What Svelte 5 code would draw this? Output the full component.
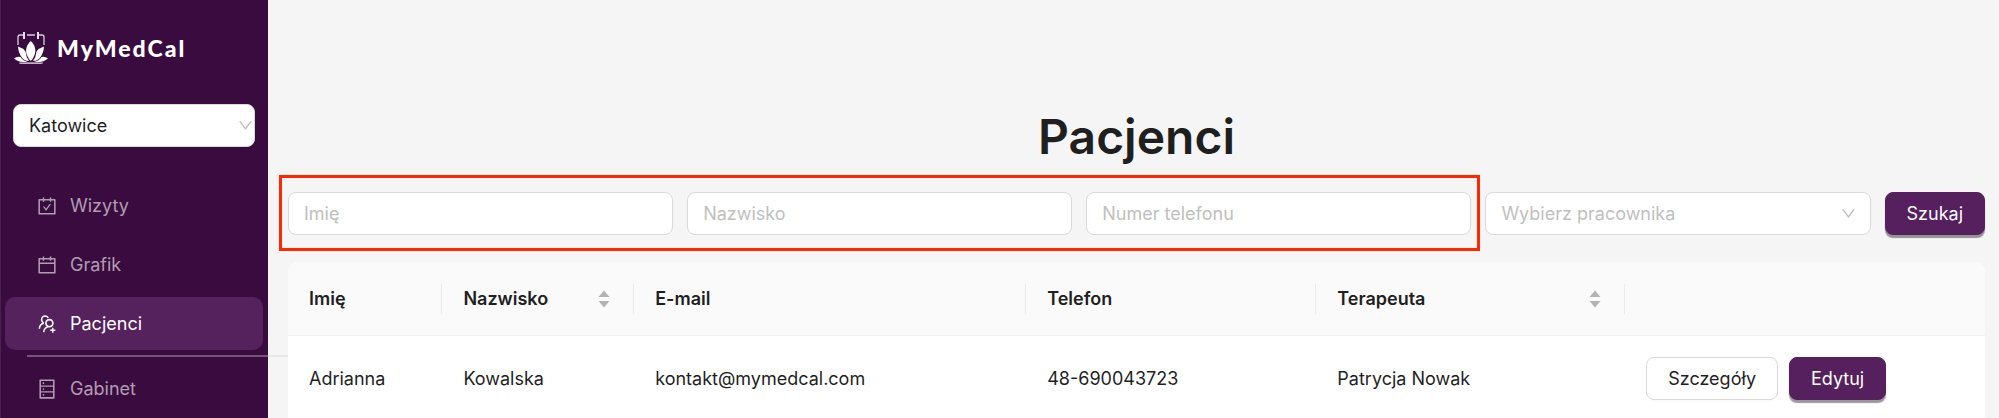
<script lang="ts">
	const nav = [
		{
			label: 'Wizyty',
			icon: 'M880 184H712v-64c0-4.4-3.6-8-8-8h-56c-4.4 0-8 3.6-8 8v64H384v-64c0-4.4-3.6-8-8-8h-56c-4.4 0-8 3.6-8 8v64H144c-17.7 0-32 14.3-32 32v664c0 17.7 14.3 32 32 32h736c17.7 0 32-14.3 32-32V216c0-17.7-14.3-32-32-32zm-40 656H184V256h128v48c0 4.4 3.6 8 8 8h56c4.4 0 8-3.6 8-8v-48h256v48c0 4.4 3.6 8 8 8h56c4.4 0 8-3.6 8-8v-48h128v584zM688 420h-55.2c-5.1 0-10 2.5-13 6.6L468.9 634.4l-64.7-89c-3-4.1-7.8-6.6-13-6.6H336c-6.5 0-10.3 7.4-6.5 12.7l126.4 174a16.1 16.1 0 0026 0l212.6-292.7c3.8-5.4 0-12.8-6.5-12.8z'
		},
		{
			label: 'Grafik',
			icon: 'M880 184H712v-64c0-4.4-3.6-8-8-8h-56c-4.4 0-8 3.6-8 8v64H384v-64c0-4.4-3.6-8-8-8h-56c-4.4 0-8 3.6-8 8v64H144c-17.7 0-32 14.3-32 32v664c0 17.7 14.3 32 32 32h736c17.7 0 32-14.3 32-32V216c0-17.7-14.3-32-32-32zm-40 656H184V460h656v380zM184 392V256h128v48c0 4.4 3.6 8 8 8h56c4.4 0 8-3.6 8-8v-48h256v48c0 4.4 3.6 8 8 8h56c4.4 0 8-3.6 8-8v-48h128v136H184z'
		},
		{
			label: 'Pacjenci',
			icon: 'M892 772h-80v-80c0-4.4-3.6-8-8-8h-48c-4.4 0-8 3.6-8 8v80h-80c-4.4 0-8 3.6-8 8v48c0 4.4 3.6 8 8 8h80v80c0 4.4 3.6 8 8 8h48c4.4 0 8-3.6 8-8v-80h80c4.4 0 8-3.6 8-8v-48c0-4.4-3.6-8-8-8zM373.5 498.4c-.9-8.7-1.4-17.5-1.4-26.4 0-15.9 1.5-31.4 4.3-46.5.7-3.6-1.2-7.3-4.5-8.8-13.6-6.1-26.1-14.5-36.9-25.1a127.54 127.54 0 01-38.7-95.4c.9-32.1 13.8-62.6 36.3-85.6 24.7-25.3 57.9-39.1 93.2-38.7 31.9.3 62.7 12.6 86 34.4 7.9 7.4 14.7 15.6 20.4 24.4 2 3.1 5.9 4.4 9.3 3.2 17.6-6.1 36.2-10.4 55.3-12.4 5.6-.6 8.8-6.6 6.3-11.6-32.5-64.3-98.9-108.7-175.7-109.9-110.9-1.7-203.3 89.2-203.3 199.9 0 62.8 28.9 118.8 74.2 155.5-31.8 14.7-61.1 35-86.5 60.4-54.8 54.7-85.8 126.9-87.8 204a8 8 0 008 8.2h56.1c4.3 0 7.9-3.4 8-7.7 1.9-58 25.4-112.3 66.7-153.5 29.4-29.4 65.4-49.8 104.7-59.7 3.9-1 6.5-4.7 6-8.7zM824 472c0-109.4-87.9-198.3-196.9-200C516.3 270.3 424 361.2 424 472c0 62.8 29 118.8 74.2 155.5a300.95 300.95 0 00-86.4 60.4C357 742.6 326 814.8 324 891.8a8 8 0 008 8.2h56c4.3 0 7.9-3.4 8-7.7 1.9-58 25.4-112.3 66.7-153.5C505.8 695.7 563 672 624 672c110.4 0 200-89.5 200-200zm-109.5 90.5C690.3 586.7 658.2 600 624 600s-66.3-13.3-90.5-37.5a127.26 127.26 0 01-37.5-91.8c.3-32.8 13.4-64.5 36.3-88 24-24.6 56.1-38.3 90.4-38.7 33.9-.3 66.8 12.9 91 36.6 24.8 24.3 38.4 56.8 38.4 91.4 0 34.2-13.3 66.3-37.5 90.5z'
		},
		{
			label: 'Gabinet',
			divided: true,
			icon: 'M832 64H192c-17.7 0-32 14.3-32 32v832c0 17.7 14.3 32 32 32h640c17.7 0 32-14.3 32-32V96c0-17.7-14.3-32-32-32zm-600 72h560v208H232V136zm560 480H232V408h560v208zm0 272H232V680h560v208zM304 240a40 40 0 1080 0 40 40 0 10-80 0zm0 272a40 40 0 1080 0 40 40 0 10-80 0zm0 272a40 40 0 1080 0 40 40 0 10-80 0z'
		}
	];

	const columns = [
		{ key: 'name', title: 'Imię' },
		{ key: 'surname', title: 'Nazwisko', sortable: true },
		{ key: 'email', title: 'E-mail' },
		{ key: 'phone', title: 'Telefon' },
		{ key: 'therapist', title: 'Terapeuta', sortable: true }
	];

	let active = $state('Pacjenci');
	let city = $state('Katowice');
	let filters = $state({ name: '', surname: '', phone: '', worker: '' });
	let sortKey = $state('');

	const patients = [
		{
			name: 'Adrianna',
			surname: 'Kowalska',
			email: 'kontakt@mymedcal.com',
			phone: '48-690043723',
			therapist: 'Patrycja Nowak'
		}
	];

	let query = $state({ name: '', surname: '', phone: '', worker: '' });

	let rows = $derived(
		patients
			.filter(
				(p) =>
					p.name.toLowerCase().includes(query.name.toLowerCase()) &&
					p.surname.toLowerCase().includes(query.surname.toLowerCase()) &&
					p.phone.includes(query.phone) &&
					p.therapist.includes(query.worker)
			)
			.sort((a: any, b: any) => (sortKey ? a[sortKey].localeCompare(b[sortKey]) : 0))
	);

	const search = (event: SubmitEvent) => {
		event.preventDefault();
		query = { ...filters };
	};
</script>

{#snippet chevron()}
	<svg class="chevron" viewBox="0 0 1024 1024" aria-hidden="true">
		<path
			d="M884 256h-75c-5.1 0-9.9 2.5-12.9 6.6L512 654.2 227.9 262.6c-3-4.1-7.8-6.6-12.9-6.6h-75c-6.5 0-10.3 7.4-6.5 12.7l352.6 486.1c12.8 17.6 39 17.6 51.7 0l352.6-486.1c3.9-5.3.1-12.7-6.4-12.7z"
		/>
	</svg>
{/snippet}

<div class="layout">
	<aside class="sidebar">
		<div class="brand">
			<svg class="brand_logo" viewBox="0 0 34 34" aria-hidden="true">
				<path
					d="M4 14V6q0-2 2-2h4M13 4h8M24 4h4q2 0 2 2v8"
					fill="none"
					stroke="#d9cedb"
					stroke-width="1.3"
				/>
				<path d="M10 1v7M24 1v7" stroke="#e6dfe7" stroke-width="2" />
				<path
					d="M16.800 10C21 14 22.500 19 20.500 24Q19 28 16.800 30Q14.500 28 13 24C11 19 12.500 14 16.800 10zM4 15.500Q9 17 11.500 20.500Q12 26 15 30Q10 30 7.500 26Q4.500 22 4 15.500zM30 15.500Q25 17 22.500 20.500Q22 26 19 30Q24 30 26.500 26Q29.500 22 30 15.500zM0 27.500Q3 25 6.500 26Q9 30 13.500 30.500Q6 32.500 0 27.500zM34 27.500Q31 25 27.500 26Q25 30 20.500 30.500Q28 32.500 34 27.500z"
					fill="#fff"
				/>
				<path d="M5 31.500Q17 31 29 31.500Q29 33 27 33H7Q5 33 5 31.500z" fill="#c4b3c7" />
			</svg>
			<span class="brand_name">MyMedCal</span>
		</div>

		<div class="select city">
			<select aria-label="Miasto" bind:value={city}>
				<option>Katowice</option>
			</select>
			{@render chevron()}
		</div>

		<nav class="menu">
			{#each nav as item}
				{#if item.divided}
					<hr class="menu_divider" />
				{/if}
				<a
					class="menu_item"
					class:active={active === item.label}
					href="#{item.label.toLowerCase()}"
					onclick={() => (active = item.label)}
				>
					<svg class="menu_icon" viewBox="0 0 1024 1024" aria-hidden="true">
						<path d={item.icon} />
					</svg>
					{item.label}
				</a>
			{/each}
		</nav>
	</aside>

	<main class="content">
		<h1>Pacjenci</h1>

		<form class="filters" onsubmit={search}>
			<div class="filters_group">
				<input aria-label="Imię" placeholder="Imię" bind:value={filters.name} />
				<input aria-label="Nazwisko" placeholder="Nazwisko" bind:value={filters.surname} />
				<input aria-label="Numer telefonu" placeholder="Numer telefonu" bind:value={filters.phone} />
			</div>
			<div class="select worker" class:empty={!filters.worker}>
				<select aria-label="Wybierz pracownika" bind:value={filters.worker}>
					<option value="">Wybierz pracownika</option>
					<option>Patrycja Nowak</option>
				</select>
				{@render chevron()}
			</div>
			<button class="btn primary" type="submit">Szukaj</button>
		</form>

		<table>
			<colgroup>
				{#each columns as column}
					<col class="col_{column.key}" />
				{/each}
				<col />
			</colgroup>
			<thead>
				<tr>
					{#each columns as column}
						<th scope="col">
							<div class="head">
								{column.title}
								{#if column.sortable}
									<button
										class="sorter"
										type="button"
										aria-label="Sortuj: {column.title}"
										onclick={() => (sortKey = column.key)}
									>
										<svg viewBox="0 0 12 18" aria-hidden="true">
											<path d="M6 0.500L11.500 7H0.500zM6 17.500L11.500 11H0.500z" />
										</svg>
									</button>
								{/if}
							</div>
						</th>
					{/each}
					<td></td>
				</tr>
			</thead>
			<tbody>
				{#each rows as row}
					<tr>
						<td>{row.name}</td>
						<td>{row.surname}</td>
						<td>{row.email}</td>
						<td>{row.phone}</td>
						<td>{row.therapist}</td>
						<td>
							<div class="actions">
								<button class="btn" type="button">Szczegóły</button>
								<button class="btn primary" type="button">Edytuj</button>
							</div>
						</td>
					</tr>
				{/each}
			</tbody>
		</table>
	</main>
</div>

<style>
	:global(body) {
		background: #f5f5f5;
	}

	.layout {
		display: flex;
		height: 100vh;
		overflow: hidden;
		font-family: Inter, 'Liberation Sans', sans-serif;
		font-size: 18px;
		line-height: 28px;
		color: #1f1f1f;
	}

	.layout * {
		box-sizing: border-box;
	}

	input,
	select,
	button {
		font: inherit;
		color: inherit;
	}

	.sidebar {
		flex: none;
		width: 268px;
		background: #3a0b3f;
		border-left: 1px solid #4a2150;
	}

	.brand {
		display: flex;
		align-items: center;
		gap: 9px;
		height: 104px;
		padding: 0 13px 9px;
	}

	.brand_logo {
		width: 34px;
		height: 34px;
	}

	.brand_name {
		font-family: Lato, sans-serif;
		font-size: 23px;
		font-weight: 900;
		letter-spacing: 2px;
		color: #fff;
	}

	.select {
		position: relative;
	}

	.select select {
		display: block;
		width: 100%;
		height: 43px;
		padding: 0 40px 0 15px;
		appearance: none;
		background: #fff;
		border: 1px solid #d9d9d9;
		border-radius: 8px;
	}

	.select.empty select {
		color: #bfbfbf;
	}

	.chevron {
		position: absolute;
		top: 13px;
		right: 14px;
		width: 17px;
		height: 17px;
		fill: #bfbfbf;
		pointer-events: none;
	}

	.city {
		margin: 0 13px 0 12px;
	}

	.city .chevron {
		right: 1px;
	}

	.menu {
		display: flex;
		flex-direction: column;
		gap: 6px;
		padding: 32px 5px 0 4px;
	}

	.menu_item {
		display: flex;
		align-items: center;
		gap: 12px;
		height: 53px;
		padding: 0 31px;
		border-radius: 10px;
		color: #b09db2;
		text-decoration: none;
	}

	.menu_item.active {
		background: #55225d;
		color: #fff;
	}

	.menu_icon {
		width: 22px;
		height: 22px;
		fill: currentColor;
	}

	/* runs past the sidebar edge, up to the table */
	.menu_divider {
		width: 261px;
		height: 2px;
		margin: -1px 0 -1px 22px;
		border: 0;
		background: linear-gradient(to right, #77557b 241px, #e9e8e9 241px);
	}

	.content {
		flex: 1;
		min-width: 0;
		padding: 106px 14px 0 20px;
	}

	h1 {
		margin: 0 0 24px;
		font-size: 48px;
		line-height: 62px;
		font-weight: 600;
		text-align: center;
	}

	.filters {
		display: grid;
		grid-template-columns: repeat(4, 1fr) auto;
		gap: 14px;
		margin-bottom: 27px;
	}

	.filters_group {
		position: relative;
		display: grid;
		grid-column: span 3;
		grid-template-columns: subgrid;
	}

	.filters_group::after {
		content: '';
		position: absolute;
		inset: -17px -9px -16px -9px;
		border: 3px solid #ff2600;
		pointer-events: none;
	}

	.filters input {
		width: 100%;
		height: 43px;
		padding: 0 15px;
		background: #fff;
		border: 1px solid #d9d9d9;
		border-radius: 8px;
	}

	.filters input::placeholder {
		color: #bfbfbf;
	}

	.btn {
		height: 43px;
		padding: 0 21px;
		background: #fff;
		border: 1px solid #d9d9d9;
		border-radius: 8px;
		box-shadow: 0 2px 0 rgba(0, 0, 0, 0.02);
		white-space: nowrap;
		cursor: pointer;
	}

	.btn.primary {
		background: #55205d;
		border-color: #55205d;
		box-shadow: 0 3px 1px rgba(0, 0, 0, 0.4);
		color: #fff;
	}

	table {
		position: relative;
		width: 100%;
		table-layout: fixed;
		border-collapse: separate;
		border-spacing: 0;
		background: #fff;
		border-radius: 10px 10px 0 0;
	}

	.col_name {
		width: 9.1%;
	}

	.col_surname {
		width: 11.3%;
	}

	.col_email {
		width: 23.1%;
	}

	.col_phone {
		width: 17.1%;
	}

	.col_therapist {
		width: 18.2%;
	}

	th,
	td {
		padding: 0;
		text-align: left;
	}

	td {
		padding: 21px;
	}

	thead th,
	thead td {
		height: 74px;
		padding: 22px 0 21px;
		background: #fafafa;
		border-bottom: 1px solid #f0f0f0;
	}

	thead th:first-child {
		border-top-left-radius: 10px;
	}

	thead td {
		border-top-right-radius: 10px;
	}

	th {
		font-weight: 600;
	}

	.head {
		display: flex;
		align-items: center;
		justify-content: space-between;
		height: 30px;
		padding: 0 23px 0 21px;
		border-right: 1px solid #ececec;
	}

	.sorter {
		width: 12px;
		height: 18px;
		padding: 0;
		background: none;
		border: 0;
		cursor: pointer;
	}

	.sorter svg {
		display: block;
		width: 12px;
		height: 18px;
		fill: #b3b3b3;
	}

	.actions {
		display: flex;
		gap: 11px;
	}
</style>
